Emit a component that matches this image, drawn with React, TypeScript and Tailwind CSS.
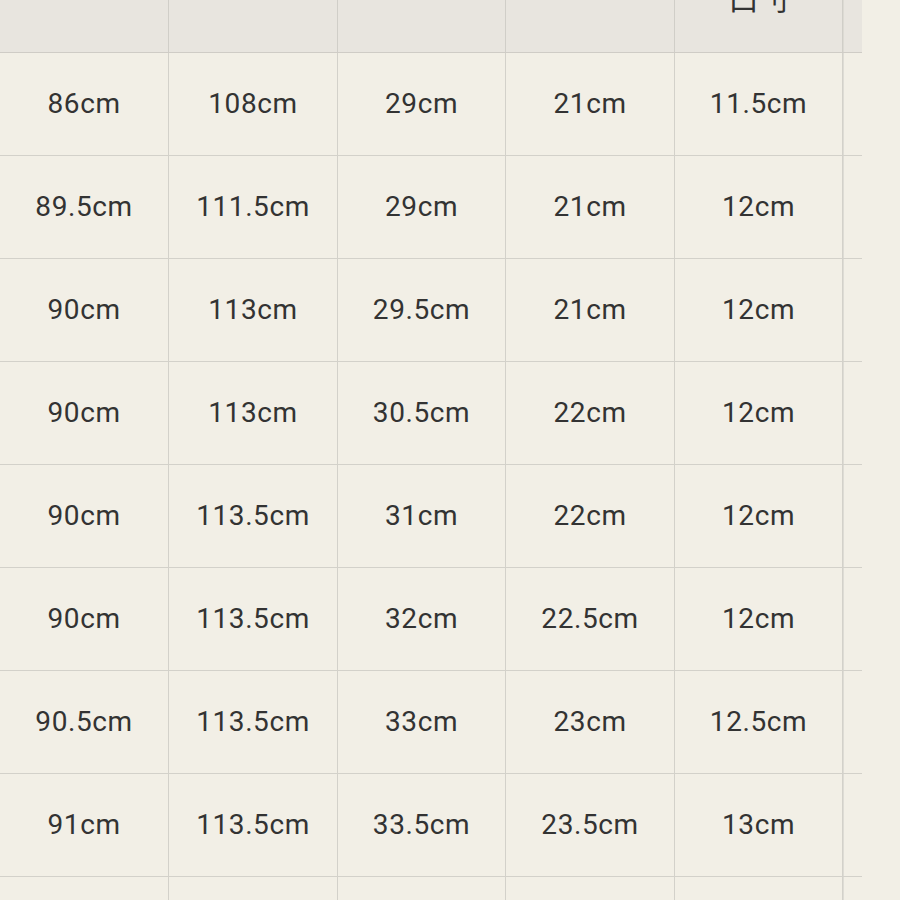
import React from 'react';

const rows: string[][] = [
  ['86cm', '108cm', '29cm', '21cm', '11.5cm'],
  ['89.5cm', '111.5cm', '29cm', '21cm', '12cm'],
  ['90cm', '113cm', '29.5cm', '21cm', '12cm'],
  ['90cm', '113cm', '30.5cm', '22cm', '12cm'],
  ['90cm', '113.5cm', '31cm', '22cm', '12cm'],
  ['90cm', '113.5cm', '32cm', '22.5cm', '12cm'],
  ['90.5cm', '113.5cm', '33cm', '23cm', '12.5cm'],
  ['91cm', '113.5cm', '33.5cm', '23.5cm', '13cm'],
  ['', '', '', '', ''],
];

const cols = 'grid grid-cols-[169px_169px_168px_169px_168px_19px]';

export default function App() {
  return (
    <div className="w-[900px] h-[900px] overflow-hidden bg-[#f2efe6] font-['Roboto','Noto_Sans_CJK_SC',sans-serif] text-[#333]">
      <div className="w-[862px]">
        <div className={`${cols} h-[53px] bg-[#e8e5df] border-b border-[#cfccc6]`}>
          {[0, 1, 2, 3, 4].map((i) => (
            <div key={i} className="border-r border-[#d0cec8] flex justify-center overflow-hidden">
              {i === 4 && (
                <span className="text-[30px] leading-none -mt-[15px]">口刂</span>
              )}
            </div>
          ))}
          <div className="border-l border-[#dcdad3]" />
        </div>
        {rows.map((r, ri) => (
          <div key={ri} className={`${cols} h-[103px] border-b border-[#d3d1ca]`}>
            {r.map((v, ci) => (
              <div
                key={ci}
                className="border-r border-[#d3d1ca] flex items-center justify-center text-[28px] tracking-[0.6px]"
              >
                {v}
              </div>
            ))}
            <div className="border-l border-[#dedcd5]" />
          </div>
        ))}
      </div>
    </div>
  );
}
